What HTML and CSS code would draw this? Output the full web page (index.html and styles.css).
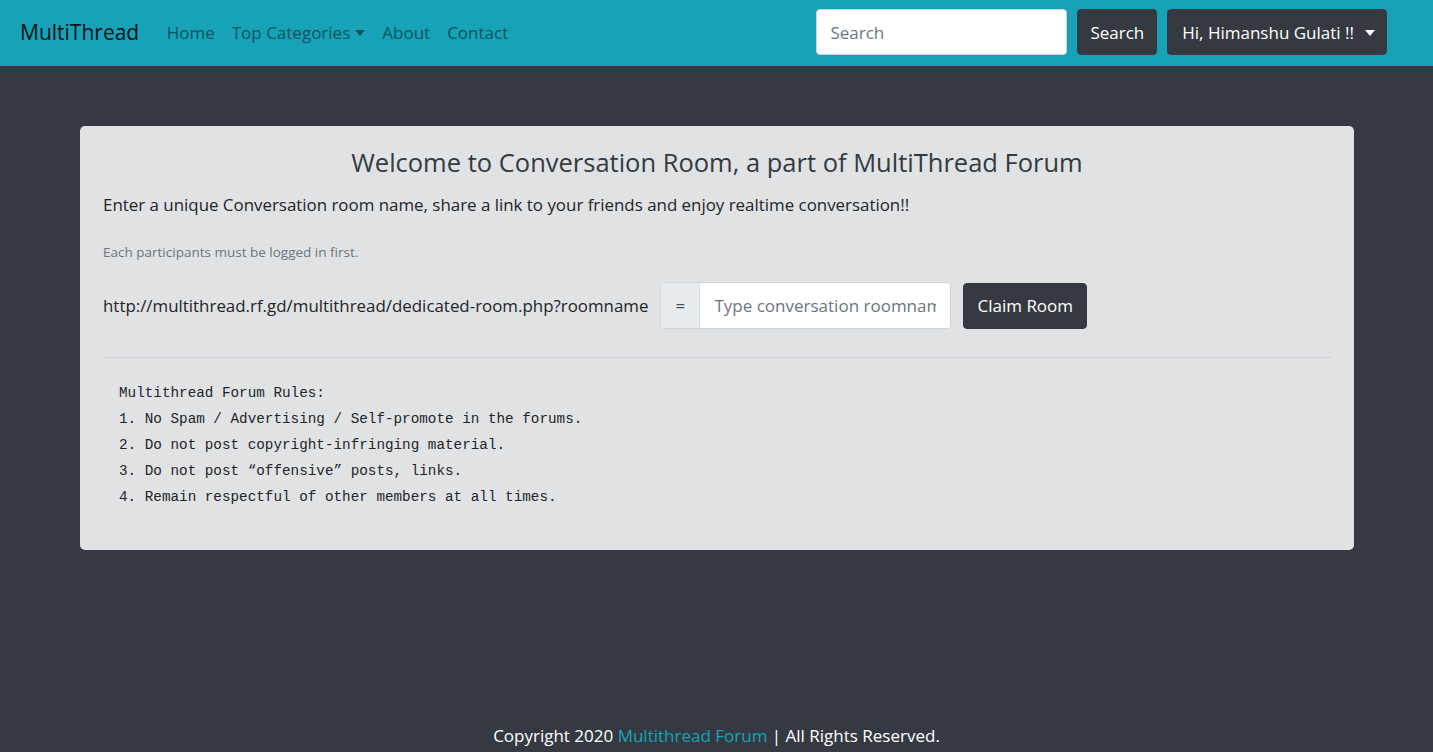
FILE: index.html
```html
<!DOCTYPE html>
<html lang="en">
<head>
<meta charset="utf-8">
<title>MultiThread - Conversation Room</title>
<link rel="stylesheet" href="styles.css">
</head>
<body>
<div class="page">
  <nav class="navbar">
    <a class="brand" href="#">MultiThread</a>
    <ul class="nav-links">
      <li><a href="#">Home</a></li>
      <li><a href="#" class="dropdown-toggle">Top Categories<span class="caret"></span></a></li>
      <li><a href="#">About</a></li>
      <li><a href="#">Contact</a></li>
    </ul>
    <form class="search-form">
      <input class="search-input" type="search" placeholder="Search">
      <button class="btn btn-dark" type="button">Search</button>
    </form>
    <button class="btn btn-dark user-btn" type="button">Hi, Himanshu Gulati !!<span class="caret caret-light"></span></button>
  </nav>

  <main class="main">
    <section class="jumbo">
      <h1 class="title">Welcome to Conversation Room, a part of MultiThread Forum</h1>
      <p class="lead">Enter a unique Conversation room name, share a link to your friends and enjoy realtime conversation!!</p>
      <p class="note">Each participants must be logged in first.</p>
      <div class="room-row">
        <span class="room-url">http://multithread.rf.gd/multithread/dedicated-room.php?roomname</span>
        <div class="input-group">
          <span class="prepend">=</span>
          <input class="room-input" type="text" placeholder="Type conversation roomname">
        </div>
        <button class="btn btn-dark claim-btn" type="button">Claim Room</button>
      </div>
      <hr class="divider">
      <pre class="rules">Multithread Forum Rules:
1. No Spam / Advertising / Self-promote in the forums.
2. Do not post copyright-infringing material.
3. Do not post “offensive” posts, links.
4. Remain respectful of other members at all times.</pre>
    </section>
  </main>

  <footer class="footer">
    <p>Copyright 2020 <a href="#">Multithread Forum</a> | All Rights Reserved.</p>
  </footer>
</div>
</body>
</html>
```

FILE: styles.css
```css
* { box-sizing: border-box; }
html, body { margin: 0; padding: 0; }
body {
  background: #353a42;
  font-family: "Open Sans", "Noto Sans", sans-serif;
  color: #212529;
}
.page {
  min-height: 752px;
  display: flex;
  flex-direction: column;
}
.navbar {
  height: 66px;
  background: #17a2b8;
  display: flex;
  align-items: center;
  padding: 0 46px 2px 20px;
}
.brand {
  font-size: 21px;
  color: #031217;
  text-decoration: none;
  margin-right: 19px;
}
.nav-links {
  list-style: none;
  margin: 0;
  padding: 0;
  display: flex;
  flex: 1;
}
.nav-links a {
  display: block;
  padding: 0 8.5px;
  font-size: 17px;
  color: #0c5360;
  text-decoration: none;
}
.caret {
  display: inline-block;
  margin-left: 5px;
  vertical-align: 3px;
  border-top: 6px solid #0c5360;
  border-left: 5px solid transparent;
  border-right: 5px solid transparent;
}
.caret-light { border-top-color: #fff; margin-left: 11px; }
.search-form {
  display: flex;
  gap: 10px;
  margin-right: 10px;
}
.search-input {
  width: 251px;
  height: 46px;
  border: 1px solid #ced4da;
  border-radius: 4px;
  padding: 0 13px;
  font-family: inherit;
  font-size: 17px;
  color: #495057;
}
.search-input::placeholder { color: #6c757d; }
.btn {
  font-family: inherit;
  font-size: 17px;
  height: 46px;
  border-radius: 4px;
  border: 1px solid #343a40;
  padding: 0 12px;
  cursor: pointer;
}
.btn-dark { background: #343a40; color: #fff; }
.user-btn { padding: 0 11px 0 14px; }
.main {
  flex: 1;
  padding: 60px 79px 0 80px;
}
.jumbo {
  background: #e1e2e4;
  border-radius: 5px;
  padding: 18px 23px 40px;
}
.title {
  margin: 0 0 11px;
  text-align: center;
  font-weight: 400;
  font-size: 25.5px;
  line-height: 37px;
  color: #343a40;
}
.lead {
  margin: 0 0 26px;
  font-size: 16.9px;
  line-height: 1.5;
  color: #212529;
}
.note {
  margin: 0 0 21px;
  font-size: 13.5px;
  color: #6c757d;
}
.room-row {
  display: flex;
  align-items: center;
  gap: 12px;
}
.room-url { font-size: 16.9px; color: #212529; }
.input-group {
  display: flex;
  height: 47px;
  width: 291px;
  border: 1px solid #ced4da;
  border-radius: 4px;
  overflow: hidden;
  background: #fff;
}
.prepend {
  width: 39px;
  background: #e9ecef;
  border-right: 1px solid #dcdfe2;
  display: flex;
  align-items: center;
  justify-content: center;
  color: #495057;
  font-size: 17px;
}
.room-input {
  flex: 1;
  min-width: 0;
  border: 0;
  padding: 0 14px;
  font-family: inherit;
  font-size: 17px;
}
.room-input::placeholder { color: #6c757d; }
.claim-btn { height: 46px; padding: 0 13px; }
.divider {
  margin: 28px 0 22px;
  border: 0;
  border-top: 1px solid #cfd1d4;
}
.rules {
  margin: 0 0 0 16px;
  font-family: "Liberation Mono", monospace;
  font-size: 14.3px;
  line-height: 26px;
  color: #212529;
}
.footer {
  text-align: center;
  color: #fff;
  font-size: 17px;
  padding-bottom: 4px;
}
.footer p { margin: 0; line-height: 24px; }
.footer a { color: #17a2b8; text-decoration: none; }
```
